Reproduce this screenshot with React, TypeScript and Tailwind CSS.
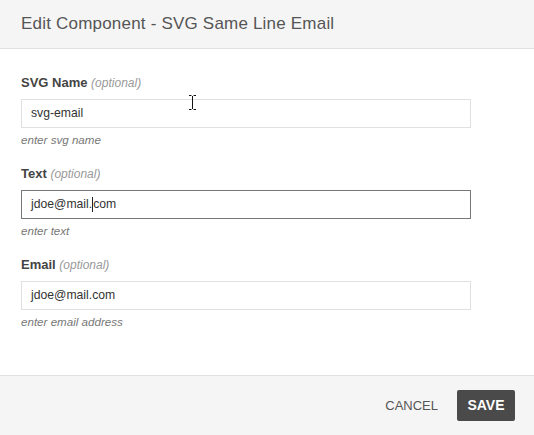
import React from 'react';

const Field = ({ label, value, help, focused, caretAfter }: { label: string; value: string; help: string; focused?: boolean; caretAfter?: number }) => (
  <div className="mb-[19px]">
    <div className="h-4 leading-4 text-[13px] text-[#444]">
      <span className="font-bold">{label}</span>{' '}
      <span className="italic text-[12px] text-[#999]">(optional)</span>
    </div>
    <div
      className={`mt-2 h-[29px] w-[450px] bg-white flex items-center pl-[9px] text-[12.2px] text-[#333] border ${
        focused ? 'border-[#777]' : 'border-[#e0e0e0]'
      }`}
    >
      {caretAfter !== undefined ? (
        <>
          <span>{value.slice(0, caretAfter)}</span>
          <span className="inline-block w-px h-[15px] bg-[#222]" />
          <span>{value.slice(caretAfter)}</span>
        </>
      ) : (
        value
      )}
    </div>
    <div className="mt-1 h-[15px] leading-[15px] italic text-[11.6px] text-[#777]">{help}</div>
  </div>
);

export default function App() {
  return (
    <div className="w-[534px] h-[435px] flex flex-col bg-white relative" style={{ fontFamily: '"Liberation Sans", Arial, sans-serif' }}>
      <div className="h-[49px] shrink-0 bg-[#f5f5f5] border-b border-[#e0e0e0] flex items-center px-[21px]">
        <h1 className="text-[17px] text-[#555] tracking-[0.2px]">Edit Component - SVG Same Line Email</h1>
      </div>

      <div className="flex-1 px-[21px] pt-[26px] border-b border-[#e0e0e0]">
        <Field label="SVG Name" value="svg-email" help="enter svg name" />
        <Field label="Text" value="jdoe@mail.com" help="enter text" focused caretAfter={10} />
        <Field label="Email" value="jdoe@mail.com" help="enter email address" />
      </div>

      <div className="h-[59px] shrink-0 bg-[#f5f5f5] flex items-start justify-end pt-[14px] pr-[19px] gap-[9px]">
        <button className="h-[31px] px-[10px] text-[13px] text-[#555]">CANCEL</button>
        <button className="h-[31px] w-[58px] rounded-[2px] bg-[#4a4a4a] text-white text-[14px] font-bold">SAVE</button>
      </div>

      {/* mouse I-beam cursor */}
      <svg className="absolute left-[188px] top-[95px]" width="9" height="15" viewBox="0 0 9 15">
        <path d="M1 0.5h2.5M5.5 0.5h2.5M1 14.5h2.5M5.5 14.5h2.5M4.5 1v13" stroke="#111" strokeWidth="1" fill="none" />
      </svg>
    </div>
  );
}
